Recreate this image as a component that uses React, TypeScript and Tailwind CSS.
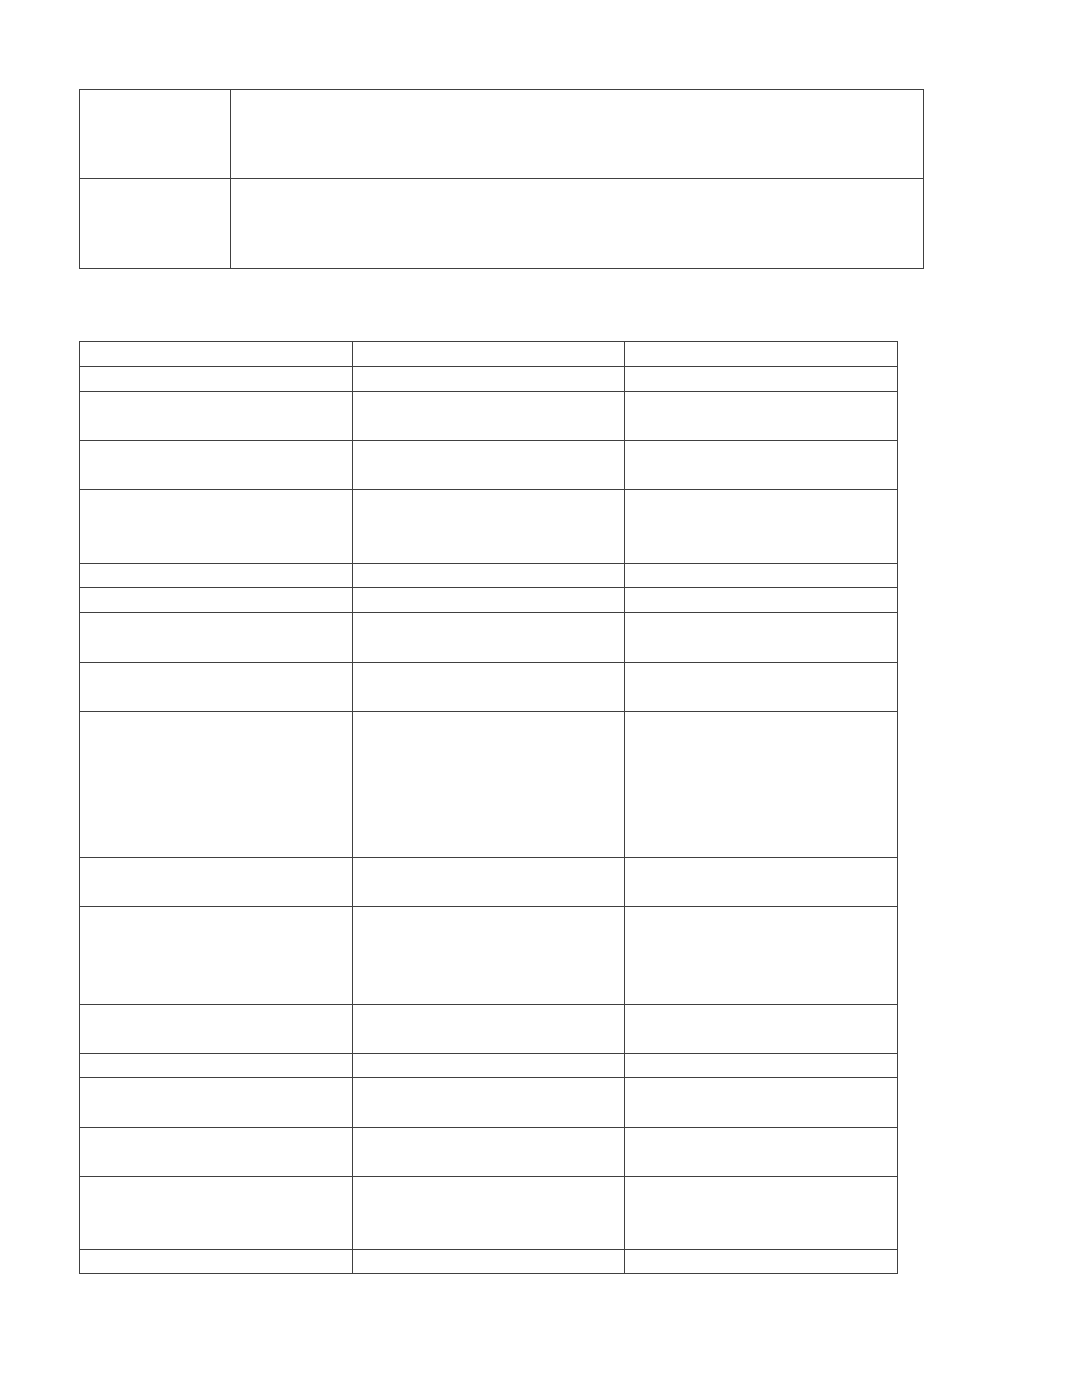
// Two empty bordered tables, as in the reference
const topRows = [89, 90];

// distances between horizontal rules of the lower table
const bottomRows = [25, 25, 49, 49, 74, 24, 25, 50, 49, 146, 49, 98, 49, 24, 50, 49, 73, 24];

export default function App() {
  return (
    <div className="min-h-[1386px] w-full bg-white pl-[79px] pt-[89px] font-['Liberation_Sans',Arial,sans-serif] text-black">
      {/* upper two-column table */}
      <div className="w-[845px] border-l border-t border-[#404040]">
        {topRows.map((h, i) => (
          <div key={i} className="flex border-b border-[#404040]" style={{ height: h }}>
            <div className="w-[151px] shrink-0 border-r border-[#404040]" />
            <div className="w-[693px] shrink-0 border-r border-[#404040]" />
          </div>
        ))}
      </div>

      {/* lower three-column table */}
      <div className="mt-[72px] w-[819px] border-l border-t border-[#404040]">
        {bottomRows.map((h, i) => (
          <div key={i} className="flex border-b border-[#404040]" style={{ height: h }}>
            <div className="w-[273px] shrink-0 border-r border-[#404040]" />
            <div className="w-[272px] shrink-0 border-r border-[#404040]" />
            <div className="w-[273px] shrink-0 border-r border-[#404040]" />
          </div>
        ))}
      </div>
    </div>
  );
}
